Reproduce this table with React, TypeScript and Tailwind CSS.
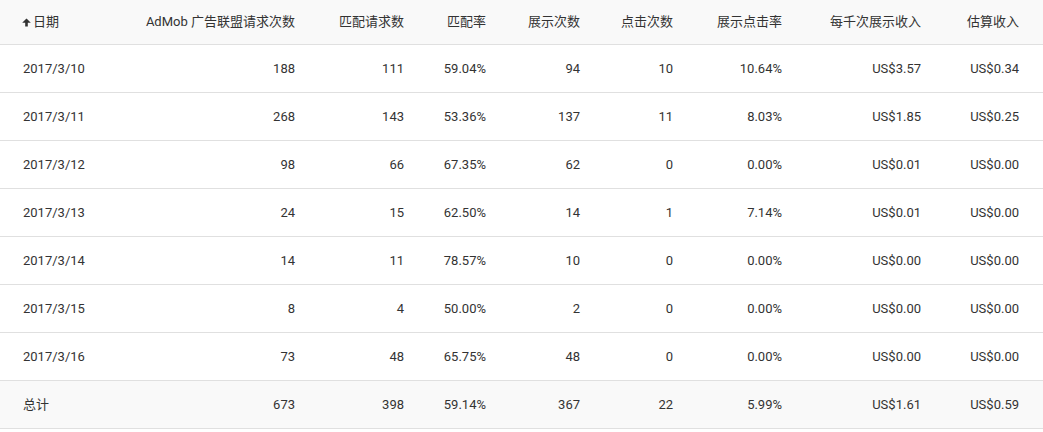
import React from 'react';

const ROWS = [
  ['2017/3/10', '188', '111', '59.04%', '94', '10', '10.64%', 'US$3.57', 'US$0.34'],
  ['2017/3/11', '268', '143', '53.36%', '137', '11', '8.03%', 'US$1.85', 'US$0.25'],
  ['2017/3/12', '98', '66', '67.35%', '62', '0', '0.00%', 'US$0.01', 'US$0.00'],
  ['2017/3/13', '24', '15', '62.50%', '14', '1', '7.14%', 'US$0.01', 'US$0.00'],
  ['2017/3/14', '14', '11', '78.57%', '10', '0', '0.00%', 'US$0.00', 'US$0.00'],
  ['2017/3/15', '8', '4', '50.00%', '2', '0', '0.00%', 'US$0.00', 'US$0.00'],
  ['2017/3/16', '73', '48', '65.75%', '48', '0', '0.00%', 'US$0.00', 'US$0.00'],
];

const TOTAL = ['总计', '673', '398', '59.14%', '367', '22', '5.99%', 'US$1.61', 'US$0.59'];

const HEADERS = ['AdMob 广告联盟请求次数', '匹配请求数', '匹配率', '展示次数', '点击次数', '展示点击率', '每千次展示收入', '估算收入'];

const GRID = 'grid grid-cols-[120px_199px_109px_82px_94px_93px_109px_139px_98px]';

// sort indicator, small filled up arrow
function ArrowUp() {
  return (
    <svg width="9" height="9" viewBox="0 0 9 9" fill="#333" className="mr-[2px]">
      <path d="M4.5 0.5L8.8 4.8H5.8V8.5H3.2V4.8H0.2Z" />
    </svg>
  );
}

function Row({ cells, total }: { cells: string[]; total?: boolean }) {
  return (
    <div className={`${GRID} h-[48px] items-center border-b border-[#e0e0e0] ${total ? 'bg-[#f9f9f9]' : 'bg-white'}`}>
      {cells.map((c, i) => (
        <div key={i} className={i === 0 ? 'pl-[23px]' : 'pr-[24px] text-right whitespace-nowrap'}>{c}</div>
      ))}
    </div>
  );
}

export default function App() {
  return (
    <div className="w-[1043px] h-[432px] bg-white text-[13px] text-[#333] font-['Roboto','Noto_Sans_CJK_SC',sans-serif]">
      <div className={`${GRID} h-[45px] items-center bg-[#f9f9f9] border-b border-[#e0e0e0]`}>
        <div className="pl-[22px] flex items-center">
          <ArrowUp />
          <span>日期</span>
        </div>
        {HEADERS.map((h) => (
          <div key={h} className="pr-[24px] text-right whitespace-nowrap">{h}</div>
        ))}
      </div>
      {ROWS.map((r) => (
        <Row key={r[0]} cells={r} />
      ))}
      <Row cells={TOTAL} total />
    </div>
  );
}
